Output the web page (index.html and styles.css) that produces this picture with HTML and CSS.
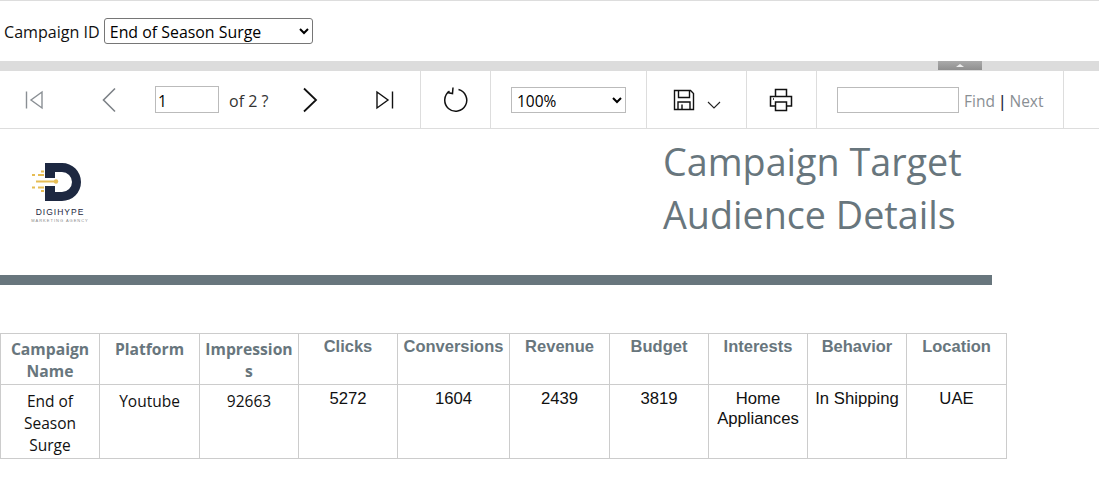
FILE: index.html
```html
<!DOCTYPE html>
<html lang="en">
<head>
    <meta charset="UTF-8">
    <meta name="viewport" content="width=device-width, initial-scale=1.0">
    <title>Campaign Target Audience Details</title>
    <link rel="stylesheet" href="styles.css">
</head>
<body>

<div class="params">
    <label class="param-label" for="campaign">Campaign ID</label>
    <select id="campaign" class="campaign-select">
        <option>End of Season Surge</option>
    </select>
</div>

<div class="splitter"><span class="collapse-btn"></span></div>

<div class="toolbar">
    <div class="tool-group pager">
        <span class="tool tool-first">
            <svg width="20" height="20" viewBox="0 0 20 20" fill="none" stroke="#8a8f94" stroke-width="1.4"><path d="M2.5 1.5V18.5M18 2L7 10L18 18Z"/></svg>
        </span>
        <span class="tool tool-prev">
            <svg width="16" height="26" viewBox="0 0 16 26" fill="none" stroke="#7d8287" stroke-width="1.6"><path d="M14 1.5L2.5 13L14 24.5"/></svg>
        </span>
        <input class="page-input" type="text" value="1">
        <span class="page-count">of 2 ?</span>
        <span class="tool tool-next">
            <svg width="16" height="26" viewBox="0 0 16 26" fill="none" stroke="#111" stroke-width="1.8"><path d="M2 1.5L14 13L2 24.5"/></svg>
        </span>
        <span class="tool tool-last">
            <svg width="20" height="20" viewBox="0 0 20 20" fill="none" stroke="#111" stroke-width="1.4"><path d="M17.5 1.5V18.5M2 2L13 10L2 18Z"/></svg>
        </span>
    </div>
    <div class="tool-group refresh">
        <svg width="26" height="28" viewBox="0 0 26 28" fill="none" stroke="#111" stroke-width="1.5"><path d="M16.5 3.6A11 11 0 1 1 7.5 5.2M11 1.5L10.5 7.5L5 6.5"/></svg>
    </div>
    <div class="tool-group zoom">
        <select class="zoom-select">
            <option>100%</option>
        </select>
    </div>
    <div class="tool-group save">
        <svg width="22" height="22" viewBox="0 0 22 22" fill="none" stroke="#111" stroke-width="1.4"><path d="M1.5 1.5H17.5L20.5 4.5V20.5H1.5Z"/><path d="M5.5 1.5V8.5H16.5V1.5M5 20.5V13H17V20.5M9 15.5V20.5"/></svg>
        <svg class="save-caret" width="14" height="8" viewBox="0 0 14 8" fill="none" stroke="#222" stroke-width="1.1"><path d="M1 1L7 7L13 1"/></svg>
    </div>
    <div class="tool-group print">
        <svg width="24" height="24" viewBox="0 0 24 24" fill="none" stroke="#111" stroke-width="1.5"><path d="M6.5 8V1.5H17.5V8M6 18H1.5V8.5H22.5V18H18"/><path d="M6.5 14H17.5V22.5H6.5Z"/><path d="M4 11H5"/></svg>
    </div>
    <div class="tool-group find">
        <input class="find-input" type="text">
        <span class="find-links"><span class="find-link">Find</span> <span class="find-bar">|</span> <span class="find-link">Next</span></span>
    </div>
</div>

<div class="report">
    <div class="report-head">
        <svg class="logo" width="62" height="66" viewBox="0 0 62 66">
            <path d="M16 5H33A19 19 0 0 1 33 43H16V28H26V34H33A10 10 0 0 0 33 14H26V20H16Z" fill="#1d2841"/>
            <g stroke="#e6bd55" stroke-width="1.8">
                <path d="M3 17H6M9 17H15M7 23.5H27M3 29.5H6M9 29.5H15M12 13.5H15M12 33H15"/>
            </g>
            <circle cx="27" cy="23.5" r="2.2" fill="#e6bd55"/>
            <text class="logo-name" x="31" y="56.5" text-anchor="middle">DIGIHYPE</text>
            <text class="logo-sub" x="31" y="64" text-anchor="middle">MARKETING AGENCY</text>
        </svg>
        <h1 class="report-title">Campaign Target Audience Details</h1>
    </div>
    <div class="report-rule"></div>

    <table class="report-table">
        <colgroup>
            <col class="col-a"><col class="col-b"><col class="col-a"><col class="col-a"><col class="col-c">
            <col class="col-b"><col class="col-a"><col class="col-a"><col class="col-a"><col class="col-b">
        </colgroup>
        <tr class="head-row">
            <th class="cell-segoe">Campaign Name</th>
            <th class="cell-segoe">Platform</th>
            <th class="cell-segoe">Impression<wbr>s</th>
            <th>Clicks</th>
            <th>Conversions</th>
            <th>Revenue</th>
            <th>Budget</th>
            <th>Interests</th>
            <th>Behavior</th>
            <th>Location</th>
        </tr>
        <tr class="data-row">
            <td class="cell-segoe">End of Season Surge</td>
            <td class="cell-segoe">Youtube</td>
            <td class="cell-segoe">92663</td>
            <td>5272</td>
            <td>1604</td>
            <td>2439</td>
            <td>3819</td>
            <td>Home Appliances</td>
            <td>In Shipping</td>
            <td>UAE</td>
        </tr>
    </table>
</div>

</body>
</html>
```

FILE: styles.css
```css
body {
    margin: 0;
    font-family: "Open Sans", "Noto Sans", sans-serif;
    background-color: #fff;
    color: #111;
}

.params {
    height: 60px;
    box-sizing: border-box;
    border-top: 1px solid #ddd;
    display: flex;
    align-items: center;
    gap: 4px;
    padding: 0 0 0 4px;
    font-size: 16.1px;
}

.param-label {
    margin-top: 2px;
}

.campaign-select {
    width: 209px;
    height: 26px;
    font-family: inherit;
    font-size: 15.9px;
    background-color: #fff;
    border: 1px solid #767676;
    border-radius: 3px;
    padding: 1px 0 0 1px;
}

.splitter {
    height: 10px;
    margin-top: 1px;
    background-color: #dcdcdc;
    display: flex;
    justify-content: flex-end;
    padding-right: 117px;
}

.collapse-btn {
    width: 44px;
    height: 9px;
    background: linear-gradient(#aaa, #8f8f8f);
    position: relative;
}

.collapse-btn::after {
    content: "";
    position: absolute;
    left: 18px;
    top: 3px;
    border-left: 4px solid transparent;
    border-right: 4px solid transparent;
    border-bottom: 3px solid #eee;
}

.toolbar {
    height: 58px;
    box-sizing: border-box;
    border-bottom: 1px solid #ddd;
    display: flex;
    font-size: 15.5px;
}

.tool-group {
    box-sizing: border-box;
    border-right: 1px solid #ddd;
    display: flex;
    align-items: center;
    height: 57px;
}

.pager { width: 421px; }
.refresh { width: 70px; padding-left: 21px; }
.zoom { width: 156px; padding-left: 20px; }
.save { width: 100px; padding-left: 26px; }
.print { width: 70px; padding-left: 22px; }
.find { width: 247px; padding-left: 20px; }

.tool {
    display: flex;
}

.tool-first { margin-left: 24px; }
.tool-prev { margin-left: 57px; }
.tool-next { margin-left: 34px; }
.tool-last { margin-left: 57px; }

.page-input {
    width: 64px;
    height: 27px;
    box-sizing: border-box;
    margin-left: 38px;
    padding: 3px 2px 1px;
    border: 1px solid #bbb;
    font-family: inherit;
    font-size: 15.5px;
}

.page-count {
    margin: 2px 0 0 10px;
    font-size: 16px;
    color: #333;
}

.zoom-select {
    width: 115px;
    height: 26px;
    font-family: inherit;
    font-size: 15.5px;
    background-color: #fff;
    border: 1px solid #bbb;
    padding: 1px 0 0 1px;
}

.save-caret {
    margin: 11px 0 0 12px;
}

.find-input {
    width: 122px;
    height: 26px;
    box-sizing: border-box;
    border: 1px solid #bbb;
}

.find-links {
    margin: 2px 0 0 5px;
    font-size: 15.5px;
    word-spacing: -1px;
}

.find-link {
    color: #8a8f94;
}

.find-bar {
    color: #1d2841;
    font-weight: 600;
}

.report {
    height: 357px;
}

.report-head {
    height: 146px;
    display: flex;
}

.logo {
    margin: 29px 0 0 29px;
    flex: none;
}

.logo-name {
    font-family: "Liberation Sans", sans-serif;
    font-size: 8.5px;
    letter-spacing: 1px;
    fill: #1d2841;
}

.logo-sub {
    font-family: "Liberation Sans", sans-serif;
    font-size: 4px;
    letter-spacing: 1px;
    fill: #888;
}

.report-title {
    width: 330px;
    margin: 6px 0 0 572px;
    font-size: 37.7px;
    line-height: 53px;
    font-weight: 400;
    color: #68767d;
}

.report-rule {
    width: 992px;
    height: 10px;
    background-color: #68767d;
}

.report-table {
    width: 1007px;
    margin-top: 48px;
    table-layout: fixed;
    border-collapse: collapse;
    font-family: "Liberation Sans", Arial, sans-serif;
    font-size: 16.7px;
    line-height: 20px;
}

.col-a { width: 99px; }
.col-b { width: 100px; }
.col-c { width: 112px; }

.report-table th, .report-table td {
    border: 1px solid #ccc;
    padding: 2px 2px;
    text-align: center;
    vertical-align: top;
}

.report-table th {
    color: #68767d;
    font-size: 16.5px;
    font-weight: 700;
}

.report-table td {
    padding-top: 4px;
    color: #111;
}

.report-table .cell-segoe {
    font-family: "Open Sans", "Noto Sans", sans-serif;
    line-height: 22px;
    padding-top: 4px;
}

.report-table th.cell-segoe {
    font-size: 15.7px;
}

.report-table td.cell-segoe {
    font-size: 15.5px;
    padding-top: 5px;
}

.head-row { height: 50px; }
.data-row { height: 73px; }
```
